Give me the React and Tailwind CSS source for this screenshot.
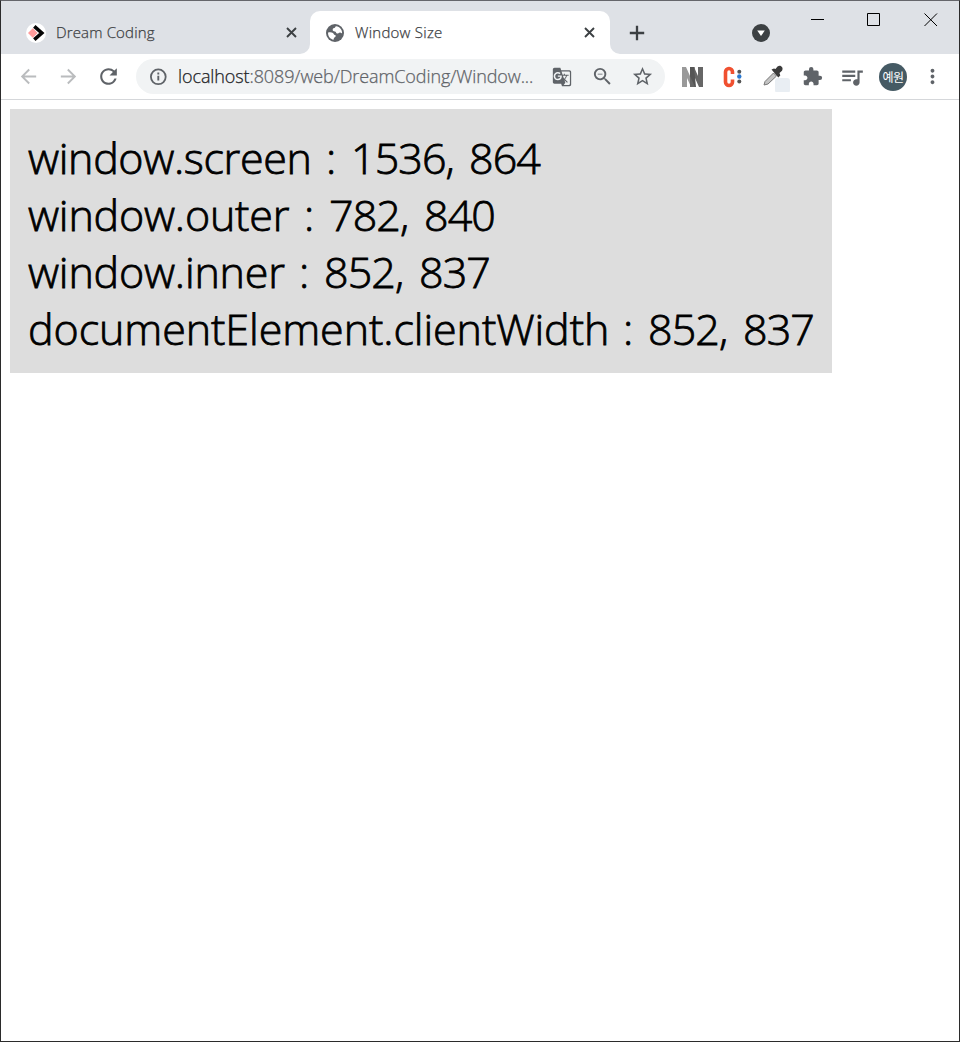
import {
  MdArrowBack, MdArrowForward, MdRefresh, MdGTranslate, MdZoomOut,
  MdStarBorder, MdExtension, MdQueueMusic, MdMoreVert,
} from "react-icons/md";

function DreamLogo() {
  return (
    <svg className="size-5 shrink-0" viewBox="0 0 20 20">
      <circle cx="10" cy="10" r="10" fill="#fff" />
      <path d="M6.800 5.200 11.600 10 6.800 14.800 2 10z" fill="#ff9c9c" />
      <path d="M8.300 3.300 15.800 10 8.300 16.700" fill="none" stroke="#050505" strokeWidth="3.600" />
    </svg>
  );
}

function Globe() {
  return (
    <svg className="size-[18px] shrink-0" viewBox="0 0 18 18">
      <circle cx="9" cy="9" r="9" fill="#5f6368" />
      <path d="M10.200 2.200c-1.300.3-.7 1.500-2 1.900-1.200.4-1.800 1-1.400 2.300.3 1.100 1.800.7 2.700 1.300.9.700.5 1.700 1.700 1.900 1.500.2 1.500-1.400 3-1.200.9.100 1.300.7 1.900.9.300-3.600-2.300-6.500-5.900-7.100z" fill="#fff" />
      <path d="M2.100 8.400c1.900-.3 3.700-.3 4.900.6 1 .8.700 1.900 1.900 2.100 1 .2 1.200 1.400.2 1.900-1 .5-1.300 1.200-1.500 2.700C4.100 15 1.700 12 2.100 8.400z" fill="#fff" />
    </svg>
  );
}

function CloseIcon() {
  return (
    <svg className="size-[17px] shrink-0" viewBox="0 0 17 17">
      <path d="m4 4 9 9M13 4l-9 9" stroke="#3c4043" strokeWidth="1.900" />
    </svg>
  );
}

function TabStrip() {
  return (
    <div className="flex h-[53px] shrink-0 bg-[#dee1e6]">
      <div className="flex w-[309px] items-end">
        <div className="flex h-[43px] w-full items-center pl-[25px] pr-[10px]">
          <DreamLogo />
          <span className="ml-[10px] flex-1 text-[15px] font-light tracking-[0.15px] text-[#3c4043] [-webkit-text-stroke:0.25px]">Dream Coding</span>
          <CloseIcon />
        </div>
      </div>
      <div className="relative mt-[10px] flex h-[43px] w-[300px] items-center rounded-t-[10px] bg-white pl-4 pr-3">
        <svg className="absolute -left-[10px] bottom-0 size-[10px]" viewBox="0 0 10 10"><path d="M10 0v10H0A10 10 0 0 0 10 0" fill="#fff" /></svg>
        <svg className="absolute -right-[10px] bottom-0 size-[10px]" viewBox="0 0 10 10"><path d="M0 0v10h10A10 10 0 0 1 0 0" fill="#fff" /></svg>
        <Globe />
        <span className="ml-[11px] flex-1 text-[15px] font-light tracking-[0.25px] text-[#3c4043] [-webkit-text-stroke:0.25px]">Window Size</span>
        <CloseIcon />
      </div>
      <div className="flex flex-1 items-start">
        <svg className="ml-[15px] mt-5 size-[24px]" viewBox="0 0 24 24"><path d="M12 4.800v14.400M4.800 12h14.400" stroke="#3c4043" strokeWidth="2.300" /></svg>
        <svg className="ml-[103px] mt-[23px] size-[18px]" viewBox="0 0 18 18">
          <circle cx="9" cy="9" r="9" fill="#3c4043" />
          <path d="M5.200 6.500h7.600L9 12z" fill="#fff" />
        </svg>
        <svg className="ml-[40px] mt-[11px] h-4 w-4" viewBox="0 0 16 16"><path d="M1 7.500h13" stroke="#000" /></svg>
        <svg className="ml-[40px] mt-[11px] h-4 w-4" viewBox="0 0 16 16"><path d="M1.500 1.500h12v12h-12z" fill="none" stroke="#000" /></svg>
        <svg className="ml-[41px] mt-[11px] h-4 w-4" viewBox="0 0 16 16"><path d="m1.500 1.500 12.500 12.500M14 1.500 1.500 14" stroke="#000" /></svg>
      </div>
    </div>
  );
}

function Toolbar() {
  return (
    <div className="flex h-[46px] shrink-0 items-center border-b border-[#d5d7da] bg-white text-[#5f6368]">
      <MdArrowBack className="ml-[16px] size-[23px] text-[#babcbe]" />
      <MdArrowForward className="ml-[17px] size-[23px] text-[#babcbe]" />
      <MdRefresh className="ml-[16px] size-[25px]" />
      <div className="ml-[15px] flex h-[35px] w-[529px] items-center rounded-full bg-[#f1f3f4]">
        <svg className="ml-3 size-5 shrink-0" viewBox="0 0 20 20">
          <circle cx="10.300" cy="9.800" r="7.400" fill="none" stroke="#5f6368" strokeWidth="1.800" />
          <path d="M10.300 8.800v4.700M10.300 5.600v1.900" stroke="#5f6368" strokeWidth="1.900" />
        </svg>
        <span className="ml-[10px] w-[357px] whitespace-nowrap text-[18px] font-light tracking-[-0.1px] text-[#5f6368] [-webkit-text-stroke:0.25px]">
          <span className="text-[#202124]">localhost</span>:8089/web/DreamCoding/Window...
        </span>
        <MdGTranslate className="ml-[17px] size-[20px]" />
        <MdZoomOut className="ml-[19px] size-[23px]" />
        <MdStarBorder className="ml-[17px] size-[23px]" />
      </div>
      <svg className="ml-[17px] h-[22px] w-[22px]" viewBox="0 0 22 22">
        <path d="M0 21V1h4l4 9V1h5v20H9L5 12v9z" fill="#999" />
        <path d="M8 21V1h4l4 9V1h5v20h-4l-4-9v9z" fill="#666" />
        <path d="M8 1h4l2 20h-1l-5-11z" fill="#555" />
      </svg>
      <svg className="ml-[18px] h-[22px] w-[22px]" viewBox="0 0 22 22">
        <path d="M10.500 8V6a3.500 3.500 0 0 0-7 0v10a3.500 3.500 0 0 0 7 0v-2.500" fill="none" stroke="#f05030" strokeWidth="3.600" />
        <circle cx="17.300" cy="5.700" r="2" fill="#555" />
        <circle cx="17.300" cy="10.500" r="2.200" fill="#2a78d0" />
        <circle cx="17.300" cy="15.500" r="2" fill="#555" />
      </svg>
      <svg className="ml-[18px] h-[30px] w-[29px]" viewBox="0 0 29 30">
        <rect x="13" y="16" width="15" height="15" rx="3" fill="#e9eef3" />
        <path d="M2 23 3 19.500l8.500-8.500 3 3-8.500 8z" fill="#c4c4c4" stroke="#777" />
        <path d="m9.500 7.500 2.500-1 1.500.5L15.500 4.500c2.800-2.300 6.500.8 4.500 4.200L17.500 11l.8 2.500-2 2z" fill="#3b3b3b" />
      </svg>
      <MdExtension className="ml-[11px] size-[21px]" />
      <MdQueueMusic className="ml-[16px] size-[26px]" />
      <span className="ml-[14px] flex size-7 items-center justify-center rounded-full bg-[#455a64] font-['Noto_Sans_CJK_KR',sans-serif] text-[12px] tracking-[-0.500px] text-white">예원</span>
      <MdMoreVert className="ml-[14px] size-[23px]" />
    </div>
  );
}

const rows = [
  { name: "window.screen", nameClass: "w-[298px] tracking-[-0.35px]", first: "1536,", firstClass: "w-[118px]", second: "864" },
  { name: "window.outer", nameClass: "w-[276px] tracking-[-0.2px]", first: "782,", firstClass: "w-[95px]", second: "840" },
  { name: "window.inner", nameClass: "w-[271px] tracking-[-0.2px]", first: "852,", firstClass: "w-[95px]", second: "837" },
  { name: "documentElement.clientWidth", nameClass: "w-[595px] tracking-[-0.08px]", first: "852,", firstClass: "w-[95px]", second: "837" },
];

export default function App() {
  return (
    <div className="flex h-[1042px] w-[960px] flex-col border border-[#2b2b2b] border-t-[#65666b] bg-white font-['Open_Sans',sans-serif]">
      <TabStrip />
      <Toolbar />
      <main className="flex-1 pl-[9px] pt-[9px]">
        <div className="h-[264px] w-[822px] whitespace-nowrap bg-[#ddd] px-[18px] pt-[20px] text-[43px] font-light leading-[57px] text-black [-webkit-text-stroke:0.8px]">
          {rows.map((row) => (
            <div className="flex" key={row.name}>
              <span className={row.nameClass}>{row.name}</span>
              <span className="w-[25px]">:</span>
              <span className={`tracking-[-0.9px] ${row.firstClass}`}>{row.first}</span>
              <span className="tracking-[-0.9px]">{row.second}</span>
            </div>
          ))}
        </div>
      </main>
    </div>
  );
}
